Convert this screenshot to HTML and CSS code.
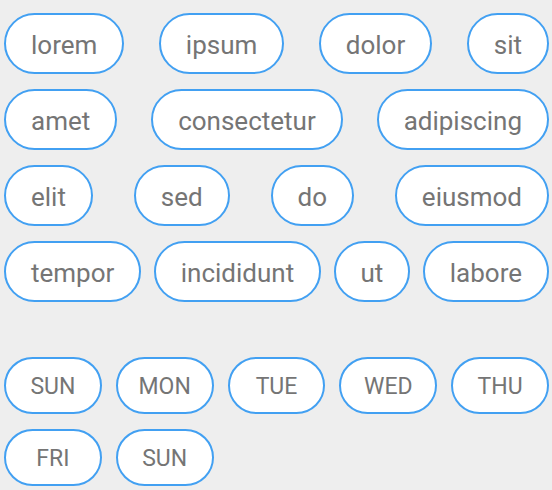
FILE: index.html
```html
<!DOCTYPE html>
<html lang="en">
<head>
  <meta charset="UTF-8">
  <meta name="viewport" content="width=device-width, initial-scale=1.0">
  <title>Chips</title>
  <link rel="stylesheet" href="styles.css">
</head>
<body>
  <div class="chip-group words">
    <span class="chip">lorem</span>
    <span class="chip">ipsum</span>
    <span class="chip">dolor</span>
    <span class="chip">sit</span>
    <span class="chip">amet</span>
    <span class="chip">consectetur</span>
    <span class="chip">adipiscing</span>
    <span class="chip">elit</span>
    <span class="chip">sed</span>
    <span class="chip">do</span>
    <span class="chip">eiusmod</span>
    <span class="chip">tempor</span>
    <span class="chip">incididunt</span>
    <span class="chip">ut</span>
    <span class="chip">labore</span>
  </div>

  <div class="chip-group days">
    <span class="chip day">SUN</span>
    <span class="chip day">MON</span>
    <span class="chip day">TUE</span>
    <span class="chip day">WED</span>
    <span class="chip day">THU</span>
    <span class="chip day">FRI</span>
    <span class="chip day">SUN</span>
  </div>
</body>
</html>
```

FILE: styles.css
```css
body {
  margin: 0;
  padding: 13px 3px 0 4px;
  background-color: #eeeeee;
  font-family: Roboto, "Noto Sans", sans-serif;
}
.chip-group {
  display: flex;
  flex-wrap: wrap;
}
.words {
  justify-content: space-between;
  column-gap: 12px;
  row-gap: 15px;
}
.chip {
  box-sizing: border-box;
  display: flex;
  align-items: center;
  justify-content: center;
  height: 61px;
  padding: 2px 25px 0;
  background-color: #ffffff;
  border: 2px solid #42a0f2;
  border-radius: 31px;
  color: #757575;
  font-size: 26px;
}
.days {
  display: grid;
  grid-template-columns: repeat(5, 1fr);
  column-gap: 14px;
  row-gap: 15px;
  margin-top: 55px;
}
.chip.day {
  height: 57px;
  padding: 2px 0 0;
  border-radius: 29px;
  font-size: 23px;
}
```
